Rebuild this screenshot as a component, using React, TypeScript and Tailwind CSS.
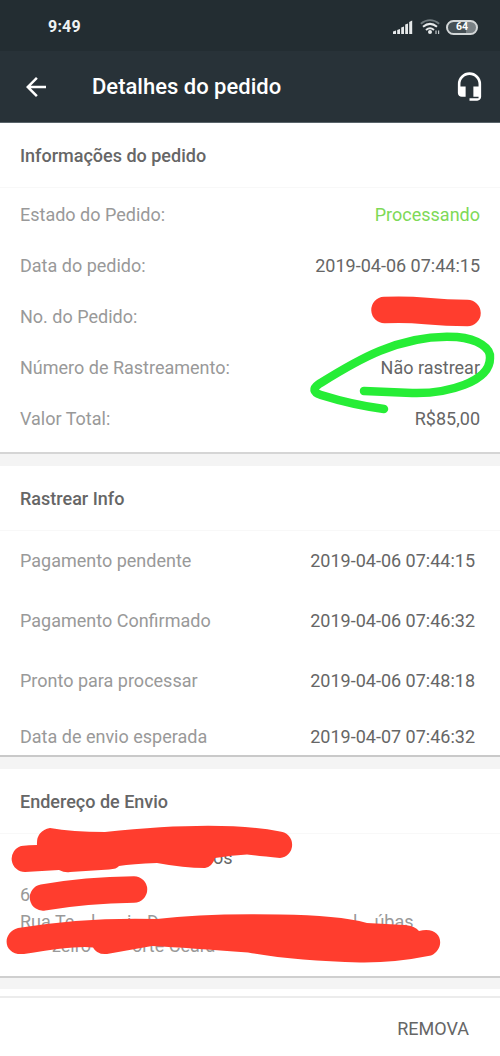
import React from "react";

const orderRows = [
  { label: "Estado do Pedido:", value: "Processando", tone: "text-[#7ed957]" },
  { label: "Data do pedido:", value: "2019-04-06 07:44:15", tone: "text-[#666]" },
  { label: "No. do Pedido:", value: "", tone: "text-[#666]" },
  { label: "Número de Rastreamento:", value: "Não rastrear", tone: "text-[#666]" },
  { label: "Valor Total:", value: "R$85,00", tone: "text-[#666]" },
];

const trackRows = [
  { label: "Pagamento pendente", value: "2019-04-06 07:44:15", height: "h-[60px]" },
  { label: "Pagamento Confirmado", value: "2019-04-06 07:46:32", height: "h-[60px]" },
  { label: "Pronto para processar", value: "2019-04-06 07:48:18", height: "h-[59px]" },
  { label: "Data de envio esperada", value: "2019-04-07 07:46:32", height: "h-[54px]" },
];

function StatusBar() {
  return (
    <div className="flex h-[51px] shrink-0 items-center justify-between bg-[#232d32] pt-[3px] pl-12 pr-[22px]">
      <span className="text-[16px] font-bold tracking-[0.2px] text-[#eef2f3]">9:49</span>
      <div className="flex items-center">
        <svg width="20" height="14" viewBox="0 0 20 14" fill="#e6e9ea">
          <path d="M0 14v-2.4l3-1V14zM4.2 14V10l2.8-1V14zM8.2 14V7.600l2.800-1V14zM12.200 14V4.600l2.800-1.200V14zM16.200 14V2l3-1.500V14z" />
        </svg>
        <svg className="ml-[7px]" width="20" height="16" viewBox="0 0 20 16" fill="none">
          <path d="M.8 4.700Q10-2.400 19.200 4.700" stroke="#6f797d" strokeWidth="1.800" />
          <path d="M3 7.800Q10 2 17 7.800" stroke="#e6e9ea" strokeWidth="2" />
          <path d="M6 11Q10 7.600 14 11" stroke="#e6e9ea" strokeWidth="2" />
          <circle cx="10" cy="13" r="2" fill="#e6e9ea" />
          <path d="M16 11.500v3.500M18.600 11.500v3.500" stroke="#c3c9cb" strokeWidth="1.200" />
        </svg>
        <div className="ml-[6px] flex h-[15px] w-[32px] items-center justify-center rounded-full border-2 border-[#d3d7d8] bg-[linear-gradient(90deg,#465055_0_64%,#798185_64%_100%)] text-[10.500px] leading-none font-bold text-white">
          64
        </div>
      </div>
    </div>
  );
}

function AppBar() {
  return (
    <header className="flex h-[72px] shrink-0 items-center border-b border-[#59646a] bg-[#283238] pl-[21px] pr-[15px]">
      <svg width="30" height="30" viewBox="0 0 24 24" fill="#fff">
        <path d="M20 11H7.830l5.590-5.590L12 4l-8 8 8 8 1.410-1.410L7.830 13H20z" />
      </svg>
      <h1 className="ml-[41px] flex-1 text-[22px] font-medium text-white">Detalhes do pedido</h1>
      <svg width="31" height="31" viewBox="0 0 24 24" fill="#fff">
        <path d="M12 1a9 9 0 0 0-9 9v7c0 1.660 1.340 3 3 3h3v-8H5v-2c0-3.870 3.130-7 7-7s7 3.130 7 7v2h-4v8h4v1h-7v2h6c1.660 0 3-1.340 3-3V10a9 9 0 0 0-9-9z" />
      </svg>
    </header>
  );
}

function Heading({ children }: { children: React.ReactNode }) {
  return (
    <h2 className="flex h-[65px] shrink-0 items-center border-b border-[#f8f8f8] px-[20px] pt-[2px] text-[18px] font-medium text-[#666]">
      {children}
    </h2>
  );
}

function Marks() {
  return (
    <svg className="pointer-events-none absolute inset-0" width="500" height="1056" viewBox="0 0 500 1056" fill="none">
      <path d="M384.500 310Q406 309 426 311Q447 313 467.500 313" stroke="#ff3d2e" strokeWidth="26.500" strokeLinecap="round" />
      <path
        d="M364 391Q387 392 412 393C447 394 490 382 490 358C491 348 478 339 457 337C399 333 351 364 319 384Q309 391 321 395Q353 405 384 409"
        stroke="#26ed36"
        strokeWidth="8.500"
        strokeLinecap="round"
        strokeLinejoin="round"
      />
      <path
        d="M50 828Q72 832 105 832Q220 820 280 831.500A13.300 13.300 0 0 1 280 858Q260 856 247 854.500Q232 855 215 858Q212 867 205 868Q184 868 157 863Q132 864 119 866Q117 869 109 869.500L70 872Q65 873 59 870L25 872A13.300 13.300 0 0 1 21 846Q29 845 37 845Q36 831 50 828Z"
        fill="#ff3d2e"
      />
      <path d="M43 897.500Q86 890 134 889.500" stroke="#ff3d2e" strokeWidth="26.500" strokeLinecap="round" />
      <path
        d="M18 928Q85 917 157 919Q205 913 280 914.500Q338 915 367 923L405 925Q415 926 419 931C443 925 446 949 431 955.500Q394 963 360 962.500Q295 961 248 952.500Q190 948 152 946L107 954Q97 955 93 947.500Q77 945 24 954C3 956 1 933 18 928Z"
        fill="#ff3d2e"
      />
    </svg>
  );
}

export default function App() {
  return (
    <div className="relative flex h-[1056px] w-[500px] flex-col overflow-hidden bg-[#f4f4f4] font-['Roboto',sans-serif] text-[18px] leading-none">
      <StatusBar />
      <AppBar />

      <section className="flex h-[331px] shrink-0 flex-col border-b-2 border-[#d5d5d5] bg-white">
        <Heading>Informações do pedido</Heading>
        {orderRows.map((row) => (
          <div key={row.label} className="flex h-[51px] shrink-0 items-center justify-between px-[20px] pt-[2px]">
            <span className="text-[#999]">{row.label}</span>
            <span className={row.tone}>{row.value}</span>
          </div>
        ))}
      </section>

      <section className="mt-[12px] flex h-[291px] shrink-0 flex-col border-b-2 border-[#c9c9c9] bg-white">
        <Heading>Rastrear Info</Heading>
        {trackRows.map((row) => (
          <div key={row.label} className={`flex shrink-0 items-center justify-between pr-[25px] pl-[20px] ${row.height}`}>
            <span className="text-[#999]">{row.label}</span>
            <span className="text-[#666]">{row.value}</span>
          </div>
        ))}
      </section>

      <section className="mt-[12px] flex h-[209px] shrink-0 flex-col border-b-2 border-[#cfcfcf] bg-white">
        <Heading>Endereço de Envio</Heading>
        <div className="flex h-[48px] items-center pl-[213px] text-[#666]">os</div>
        <div className="flex h-[26px] items-center pl-[20px] text-[#999]">6</div>
        <div className="flex h-[28px] items-center pl-[20px] text-[#999]">
          <span className="w-[71px]">Rua Te</span>
          <span className="w-[36px]">l</span>
          <span className="w-[20px]">i</span>
          <span className="w-[206px]">D</span>
          <span>l</span>
          <span className="ml-[17px]">úbas</span>
        </div>
        <div className="flex h-[20px] items-center pl-[52px] text-[#999]">
          <span className="w-[80px]">zeiro</span>
          <span>orte Ceará</span>
        </div>
      </section>

      <footer className="mt-[11px] flex flex-1 flex-col bg-white">
        <div className="mt-[7px] h-[2px] bg-[#ececec]" />
        <button className="flex flex-1 items-center justify-end pr-[31px] pt-[3px] text-[18px] text-[#666]">REMOVA</button>
      </footer>

      <Marks />
    </div>
  );
}
